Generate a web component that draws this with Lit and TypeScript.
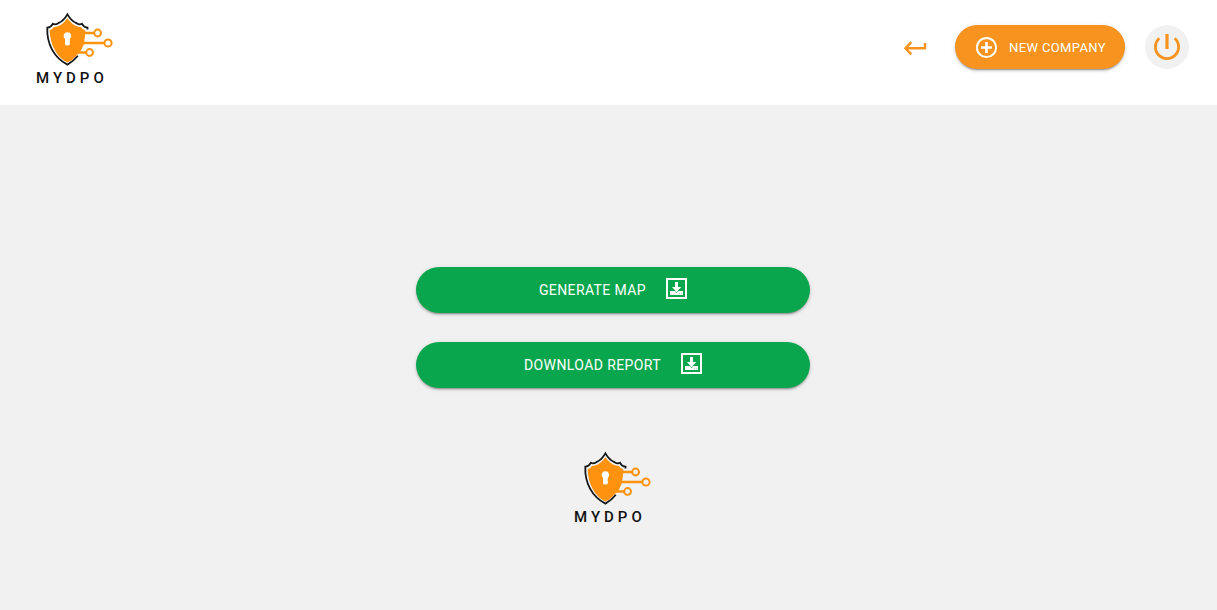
import { LitElement, html, css, svg } from "lit";
import { customElement } from "lit/decorators.js";

@customElement("mydpo-logo")
class MydpoLogo extends LitElement {
  static styles = css`
    :host { display: block; }
    .logo { display: block; width: 78px; height: 72px; overflow: visible; }
    .outline { fill: none; stroke: #14181b; stroke-width: 1.8; }
    .shield { fill: #ff920f; }
    .trace { fill: none; stroke: #ff920f; stroke-width: 2.4; }
    .node { fill: none; stroke: #ff920f; stroke-width: 2; }
    .hole { fill: #fff; }
    .word {
      fill: #111;
      font: 500 15px Roboto, sans-serif;
      letter-spacing: 4px;
    }
  `;

  render() {
    return html`<svg class="logo" viewBox="0 0 78 72" role="img" aria-label="MYDPO">
      ${svg`
        <path class="outline" d="M51.5 18.5V16.6Q47.8 16.3 46 12.8Q43.6 14 40.5 12.2Q35.4 10.2 31.4 3.4Q27.4 10.2 22.3 12.2Q19.2 14 16.8 12.8Q15 16.3 11.3 16.6C10.6 33 18 46.5 31.4 53.6Q37.5 50.2 41.8 44.7"/>
        <path class="shield" d="M31.4 7.2Q36 13.6 41 15.3Q43.6 16.2 45 15.9Q46.5 18.6 49.3 19.3V22L48 33L45 39.5L40.5 44.5Q36.8 49.2 31.4 51.6C20.8 46 14.2 34.5 13.6 19.2Q16.8 18.4 17.8 15.9Q19.4 16.2 21.8 15.3Q26.8 13.6 31.4 7.2Z"/>
        <path class="trace" d="M47 22H58.5M45 32H68.5M42 41.5H50.5"/>
        <circle class="node" cx="61.6" cy="22" r="3.4"/>
        <circle class="node" cx="72" cy="32" r="3.6"/>
        <circle class="node" cx="53.6" cy="41.5" r="3.4"/>
        <path class="hole" d="M31.4 21.2A3.7 3.7 0 0 1 33.8 27.8V33.2Q33.8 34.6 31.4 34.6Q29 34.6 29 33.2V27.8A3.7 3.7 0 0 1 31.4 21.2Z"/>
        <text class="word" x="0" y="72">MYDPO</text>
      `}
    </svg>`;
  }
}

@customElement("app-root")
class AppRoot extends LitElement {
  static styles = css`
    :host {
      display: flex;
      flex-direction: column;
      min-height: 100vh;
      background: #f1f1f1;
      font-family: Roboto, "Liberation Sans", sans-serif;
    }
    .header {
      display: flex;
      align-items: center;
      justify-content: space-between;
      padding: 11px 28px 22px 36px;
      background: #fff;
    }
    .actions { display: flex; align-items: center; gap: 20px; }
    button {
      display: flex;
      align-items: center;
      justify-content: center;
      border: 0;
      margin: 0;
      padding: 0;
      font-family: inherit;
      text-transform: uppercase;
      cursor: pointer;
    }
    svg { display: block; }
    .back { width: 40px; height: 40px; background: none; color: #f7931e; }
    .pill {
      color: #fff;
      letter-spacing: 0.02857em;
      box-shadow: 0 3px 1px -2px rgba(0, 0, 0, 0.2), 0 2px 2px 0 rgba(0, 0, 0, 0.14),
        0 1px 5px 0 rgba(0, 0, 0, 0.12);
    }
    .new {
      height: 44px;
      padding: 0 19px 0 20px;
      gap: 11px;
      border-radius: 22px;
      background: #f7931e;
      font-size: 13px;
    }
    .power { width: 44px; height: 44px; border-radius: 50%; background: #f1f1f1; color: #f7931e; }
    .main {
      display: grid;
      grid-template-columns: repeat(3, 1fr);
      gap: 9px;
      padding: 162px 4px 40px 13px;
    }
    .panel { grid-column: 2; display: flex; flex-direction: column; align-items: center; }
    .task {
      width: 100%;
      height: 46px;
      gap: 20px;
      border-radius: 23px;
      background: #0aa64d;
      font-size: 14px;
      margin-bottom: 29px;
    }
    .task svg { margin-bottom: 3px; }
    .brand { margin-top: 33px; }
  `;

  private task(label: string) {
    return html`<button class="pill task">
      <span>${label}</span>
      <svg width="21" height="21" viewBox="0 0 21 21" aria-hidden="true">
        <path fill="none" stroke="#fff" stroke-width="2" d="M1 1H20V20H1Z" />
        <path fill="#fff" d="M4 13H17V17H4Z" />
        <path fill="none" stroke="#0aa64d" stroke-width="0.8" d="M9 13.2L10.5 14.7L12 13.2" />
        <path fill="#fff" d="M9 4H12V9H15.3L10.5 14L6 9H9Z" />
        <path fill="#0aa64d" fill-opacity="0.4" d="M13 15H14V16H13ZM15 15H16V16H15Z" />
      </svg>
    </button>`;
  }

  render() {
    return html`
      <header class="header">
        <mydpo-logo></mydpo-logo>
        <div class="actions">
          <button class="back" aria-label="Back">
            <svg width="24" height="18" viewBox="0 0 24 18" aria-hidden="true">
              <path fill="none" stroke="currentColor" stroke-width="2.4" d="M8.3 4.2L2.5 10.3L8.3 16.4M2.5 10.3H22V5" />
            </svg>
          </button>
          <button class="pill new">
            <svg width="23" height="23" viewBox="0 0 23 23" aria-hidden="true" fill="none" stroke="#fff">
              <circle cx="11.5" cy="11.5" r="9.6" stroke-width="2" />
              <path stroke-width="2.6" d="M11.5 6V17M6 11.5H17" />
            </svg>
            <span>New company</span>
          </button>
          <button class="power" aria-label="Log out">
            <svg width="28" height="28" viewBox="0 0 28 28" aria-hidden="true" fill="none" stroke="currentColor">
              <path stroke-width="2.8" d="M6.3 5.3A11.6 11.6 0 1 0 21.7 5.3" />
              <path stroke-width="3.2" d="M14 1V16" />
            </svg>
          </button>
        </div>
      </header>
      <main class="main">
        <div class="panel">
          ${this.task("Generate map")} ${this.task("Download report")}
          <mydpo-logo class="brand"></mydpo-logo>
        </div>
      </main>
    `;
  }
}
